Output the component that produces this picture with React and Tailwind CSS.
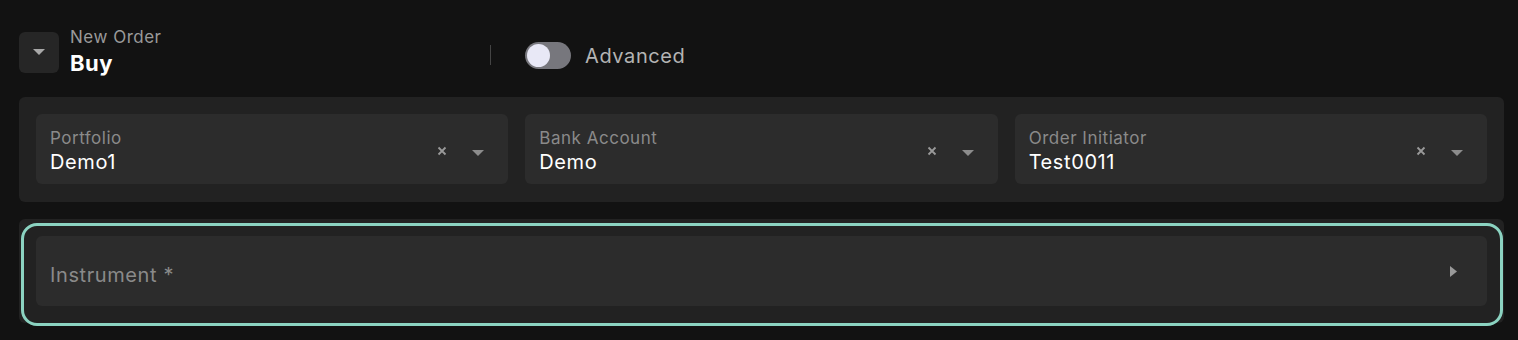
import React from 'react';

const font = { fontFamily: 'Inter, "Noto Sans", sans-serif' };

const Caret = ({ className = '' }) => (
    <svg width="12" height="6" viewBox="0 0 12 6" className={className}>
        <path d="M0 0 L12 0 L6 6 Z" fill="currentColor" />
    </svg>
);

const SelectField = ({ label, value }) => (
    <div className="flex-1 h-[70px] bg-[#2c2c2c] rounded-md flex items-center pl-[14px] pr-[24px]">
        <div className="flex-1 flex flex-col mt-[4px]">
            <span className="text-[17px] leading-[20px] tracking-[0.03em] text-[#8a8a8a]">{label}</span>
            <span className="text-[20px] leading-[26px] tracking-[0.03em] text-white mt-[1px]">{value}</span>
        </div>
        <div className="flex items-center gap-[25px] text-[#9a9a9a] mt-[4px]">
            <svg width="10" height="10" viewBox="0 0 10 10">
                <path d="M1.5 1.5 L8.5 8.5 M8.5 1.5 L1.5 8.5" stroke="currentColor" strokeWidth="1.8" />
            </svg>
            <Caret className="text-[#8c8c8c] mt-[4px]" />
        </div>
    </div>
);

export default function App() {
    return (
        <div className="w-full min-h-[340px] bg-[#121212] pl-[19px] pr-[14px] pt-[27px]" style={font}>
            <div className="flex items-center h-[50px]">
                <button className="w-[40px] h-[41px] rounded-md bg-[#262626] flex items-center justify-center text-[#a8a8a8]">
                    <Caret />
                </button>
                <div className="ml-[11px] flex flex-col w-[420px]">
                    <span className="text-[17px] leading-[21px] tracking-[0.03em] text-[#9a9a9a]">New Order</span>
                    <span className="text-[22px] leading-[27px] tracking-[0.02em] font-bold text-white mt-[2px]">Buy</span>
                </div>
                <div className="w-px h-[20px] bg-[#444] mt-[5px]"></div>
                <div className="ml-[34px] flex items-center gap-[14px] mt-[6px]">
                    <div className="w-[46px] h-[27px] rounded-full bg-[#77777d] flex items-center px-[2px]">
                        <div className="w-[23px] h-[23px] rounded-full bg-[#e8e8f6]"></div>
                    </div>
                    <span className="text-[20px] tracking-[0.03em] text-[#b4b4b4] mt-[2px]">Advanced</span>
                </div>
            </div>

            <div className="mt-[20px] bg-[#222222] rounded-md pt-[17px] px-[17px] pb-[18px] flex gap-[17px]">
                <SelectField label="Portfolio" value="Demo1" />
                <SelectField label="Bank Account" value="Demo" />
                <SelectField label="Order Initiator" value="Test0011" />
            </div>

            <div className="relative mt-[17px] bg-[#222222] rounded-md pt-[17px] px-[17px] pb-[17px]">
                <div className="h-[70px] bg-[#2c2c2c] rounded-md flex items-center pl-[14px] pr-[30px]">
                    <span className="flex-1 text-[20px] tracking-[0.03em] text-[#8a8a8a] mt-[8px]">Instrument *</span>
                    <svg width="7" height="11" viewBox="0 0 7 11" className="text-[#9a9a9a]">
                        <path d="M0 0 L7 5.5 L0 11 Z" fill="currentColor" />
                    </svg>
                </div>
                <div className="absolute left-[2px] right-[1px] top-[4px] bottom-[-3px] rounded-[16px] border-[3px] border-[#8bd3c1] pointer-events-none"></div>
            </div>
        </div>
    );
}
